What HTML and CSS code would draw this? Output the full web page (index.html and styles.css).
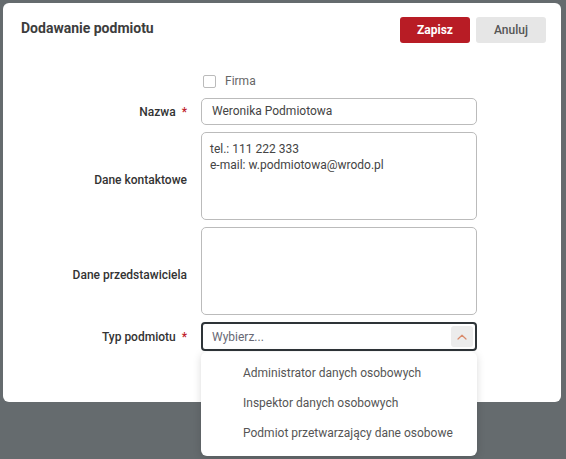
FILE: index.html
```html
<!DOCTYPE html>
<html lang="pl">
<head>
<meta charset="utf-8">
<link rel="stylesheet" href="styles.css">
</head>
<body>
<div class="modal">
  <div class="header">
    <h1 class="title">Dodawanie podmiotu</h1>
    <div class="actions">
      <button class="btn btn-primary">Zapisz</button>
      <button class="btn btn-secondary">Anuluj</button>
    </div>
  </div>
  <div class="form">
    <div class="label"></div>
    <label class="check"><span class="box"></span><span>Firma</span></label>

    <div class="label">Nazwa <span class="req">*</span></div>
    <div class="input">Weronika Podmiotowa</div>

    <div class="label label-area">Dane kontaktowe</div>
    <div class="textarea">tel.: 111 222 333<br>e-mail: w.podmiotowa@wrodo.pl</div>

    <div class="label label-area">Dane przedstawiciela</div>
    <div class="textarea"></div>

    <div class="label">Typ podmiotu <span class="req">*</span></div>
    <div class="select-wrap">
      <div class="select">
        <span class="placeholder">Wybierz...</span>
        <span class="toggle">
          <svg width="10" height="6" viewBox="0 0 10 6"><path d="M1 5 L5 1.2 L9 5" fill="none" stroke="#d98a6a" stroke-width="1.2" stroke-linecap="round" stroke-linejoin="round"/></svg>
        </span>
      </div>
      <ul class="menu">
        <li>Administrator danych osobowych</li>
        <li>Inspektor danych osobowych</li>
        <li>Podmiot przetwarzający dane osobowe</li>
      </ul>
    </div>
  </div>
</div>
</body>
</html>
```

FILE: styles.css
```css
* { box-sizing: border-box; }
html, body { margin: 0; padding: 0; }
body {
  background: #656b6e;
  width: 566px;
  height: 459px;
  overflow: hidden;
  font-family: Roboto, "Liberation Sans", Arial, sans-serif;
  padding: 3px 5px 0 3px;
}
.modal {
  background: #fff;
  border-radius: 6px;
  height: 399px;
  padding: 14px 15px 0 18px;
}
.header {
  display: flex;
  justify-content: space-between;
  align-items: flex-start;
}
.title {
  margin: 2px 0 0 0;
  font-size: 14px;
  font-weight: 700;
  color: #3d3d3d;
  line-height: 18px;
}
.actions { display: flex; gap: 6px; }
.btn {
  width: 70px;
  height: 26px;
  border: none;
  border-radius: 3px;
  font-family: inherit;
  font-size: 12px;
  padding: 0;
}
.btn-primary { background: #b81c25; color: #fff; font-weight: 700; }
.btn-secondary { background: #e6e6e6; color: #555; font-weight: 500; }

.form {
  margin-top: 29px;
  display: grid;
  grid-template-columns: 166px 276px;
  column-gap: 14px;
  row-gap: 7px;
  align-items: center;
}
.label {
  text-align: right;
  font-size: 12px;
  font-weight: 500;
  color: #333;
}
.label-area { padding-top: 8px; }
.req { color: #c0202a; margin-left: 3px; }
.check {
  display: flex;
  align-items: center;
  gap: 9px;
  font-size: 12px;
  color: #666;
  height: 18px;
  margin-left: 2px;
  margin-bottom: 1px;
}
.box {
  width: 13px;
  height: 13px;
  border: 1px solid #bbb;
  border-radius: 2px;
}
.input {
  height: 27px;
  border: 1px solid #bbb;
  border-radius: 5px;
  font-size: 12px;
  color: #444;
  padding: 0 10px;
  line-height: 25px;
}
.textarea {
  height: 88px;
  border: 1px solid #bbb;
  border-radius: 5px;
  font-size: 12px;
  color: #444;
  padding: 8px 8px;
  line-height: 16px;
}
.select-wrap { position: relative; }
.select {
  height: 29px;
  border: 2px solid #2e3438;
  border-radius: 4px;
  display: flex;
  align-items: center;
  justify-content: space-between;
  padding: 0 2px 0 9px;
}
.placeholder { font-size: 12px; color: #686874; }
.toggle {
  width: 22px;
  height: 21px;
  background: #ececec;
  border-radius: 3px;
  display: flex;
  align-items: center;
  justify-content: center;
}
.menu {
  position: absolute;
  left: 0;
  top: 30px;
  width: 276px;
  margin: 0;
  padding: 6px 0 8px 0;
  list-style: none;
  background: #fff;
  border-radius: 6px;
  box-shadow: 0 2px 8px rgba(0,0,0,0.15);
}
.menu li {
  font-size: 12px;
  color: #555;
  padding-left: 42px;
  height: 30px;
  line-height: 30px;
}
```
